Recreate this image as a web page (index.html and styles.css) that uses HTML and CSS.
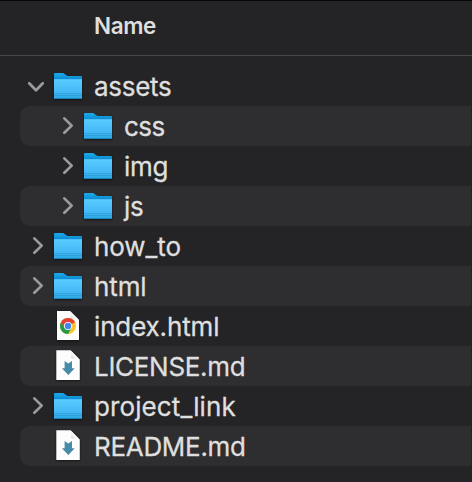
FILE: index.html
```html
<!DOCTYPE html>
<html lang="en">
<head>
<meta charset="utf-8">
<title>Files</title>
<link rel="stylesheet" href="styles.css">
</head>
<body>
<svg class="defs" aria-hidden="true">
  <defs>
    <linearGradient id="front" x1="0" y1="0" x2="0" y2="1">
      <stop offset="0" stop-color="#63d2ff"/><stop offset=".12" stop-color="#54c8fe"/><stop offset=".68" stop-color="#43b8f3"/><stop offset="1" stop-color="#29a6e5"/>
    </linearGradient>
    <linearGradient id="back" x1="0" y1="0" x2="0" y2="1">
      <stop offset="0" stop-color="#20a8ea"/><stop offset=".22" stop-color="#0d8fd4"/><stop offset="1" stop-color="#1686bc"/>
    </linearGradient>
    <linearGradient id="fold" x1="0" y1="1" x2="1" y2="0">
      <stop offset="0" stop-color="#c8c8c8"/><stop offset=".5" stop-color="#ffffff"/><stop offset="1" stop-color="#dedede"/>
    </linearGradient>
    <symbol id="folder" viewBox="0 0 30 40">
      <path d="M1 32.2V8q0-1 1-1h7.5q1.2 0 2.2.9l1.5 1.3q1 .8 2.2.8H28q1 0 1 1v21.2z" fill="url(#back)"/>
      <path d="M1 13.2h28V32q0 1-1 1H2q-1 0-1-1z" fill="url(#front)"/>
      <path d="M1 27.5h28M1 29.5h28" stroke="#218fc9" stroke-width=".7" opacity=".65"/>
      <path d="M1.5 32.5h27" stroke="#1479ac" stroke-width=".8"/>
    </symbol>
    <symbol id="open" viewBox="0 0 20 40"><path d="M3.2 17.2l6.8 7.1 6.8-7.1"/></symbol>
    <symbol id="closed" viewBox="0 0 20 40"><path d="M8.3 12.4l7.4 7.2-7.4 7.2"/></symbol>
    <symbol id="web" viewBox="0 0 30 40">
      <path d="M4 5h13l9 9v20H4z" fill="#fdfdfd"/>
      <path d="M17 5q1.5 6.5 0 8 3-.7 9 1z" fill="url(#fold)"/>
      <circle cx="15" cy="20" r="8" fill="#fbc62d"/>
      <path d="M15 20L8.07 16A8 8 0 0 1 21.93 16z" fill="#e24133"/>
      <path d="M8.07 16A8 8 0 0 0 15 28l3.5-6L15 20l-3.5 2z" fill="#27984b"/>
      <path d="M8.07 16h13.86L15 20l-3.46 2z" fill="#e24133"/>
      <circle cx="15" cy="20" r="4" fill="#fff"/>
      <circle cx="15" cy="20" r="3.2" fill="#4285f4"/>
    </symbol>
    <symbol id="markdown" viewBox="0 0 30 40">
      <path d="M3.3 4.3h14.2l9.3 9.5v20.1H3.3z" fill="#fdfdfd"/>
      <path d="M17.5 4.3q1.7 6.5 0 8 3-.2 9.3 1.5z" fill="url(#fold)"/>
      <path d="M11.6 15l3.7 2.5L19 15v7.3h2.7l-6.4 6.7-6.4-6.7h2.7z" fill="#488ba9"/>
    </symbol>
  </defs>
</svg>
<main class="browser">
  <header class="heading">Name</header>
  <ul class="files">
    <li class="row assets"><svg class="arrow"><use href="#open"/></svg><svg class="icon"><use href="#folder"/></svg><span>assets</span></li>
    <li class="row child css"><svg class="arrow"><use href="#closed"/></svg><svg class="icon"><use href="#folder"/></svg><span>css</span></li>
    <li class="row child img"><svg class="arrow"><use href="#closed"/></svg><svg class="icon"><use href="#folder"/></svg><span>img</span></li>
    <li class="row child js"><svg class="arrow"><use href="#closed"/></svg><svg class="icon"><use href="#folder"/></svg><span>js</span></li>
    <li class="row how-to"><svg class="arrow"><use href="#closed"/></svg><svg class="icon"><use href="#folder"/></svg><span>how_to</span></li>
    <li class="row html"><svg class="arrow"><use href="#closed"/></svg><svg class="icon"><use href="#folder"/></svg><span>html</span></li>
    <li class="row index"><svg class="arrow"></svg><svg class="icon"><use href="#web"/></svg><span>index.html</span></li>
    <li class="row license"><svg class="arrow"></svg><svg class="icon"><use href="#markdown"/></svg><span>LICENSE.md</span></li>
    <li class="row project"><svg class="arrow"><use href="#closed"/></svg><svg class="icon"><use href="#folder"/></svg><span>project_link</span></li>
    <li class="row readme"><svg class="arrow"></svg><svg class="icon"><use href="#markdown"/></svg><span>README.md</span></li>
  </ul>
</main>
</body>
</html>
```
FILE: styles.css
```css
* { box-sizing: border-box; }
body { margin: 0; background: #242426; color: #dfdfdf; font-family: Inter, "Liberation Sans", sans-serif; }
.defs { display: block; width: 0; height: 0; }
.browser { height: 482px; border-top: 1px solid #070707; overflow: hidden; }
.heading { height: 55px; padding: 5px 0 0 94px; border-bottom: 1px solid #464648; font-size: 22.5px; line-height: 40px; font-weight: 600; letter-spacing: -.4px; }
.files { margin: 0; padding: 10px 1px 0 20px; list-style: none; }
.row { display: flex; align-items: center; height: 40px; padding-left: 6px; border-radius: 10px 0 0 10px; font-size: 26px; line-height: 38px; letter-spacing: -.3px; white-space: nowrap; }
.row span { padding-top: 2px; -webkit-text-stroke: .3px currentColor; }
.row:nth-child(even) { background: #2e2e30; }
.child { padding-left: 36px; }
.css { letter-spacing: -.6px; }
.how-to { letter-spacing: -.1px; }
.html { letter-spacing: -.1px; }
.index { letter-spacing: -.15px; }
.project { letter-spacing: .1px; }
.arrow { width: 20px; height: 40px; flex: none; fill: none; stroke: #9b9b9c; stroke-width: 2.7; stroke-linecap: round; stroke-linejoin: round; }
.icon { width: 30px; height: 40px; margin: 0 11px 0 7px; flex: none; filter: drop-shadow(0 1px 1px #0008); }
```
